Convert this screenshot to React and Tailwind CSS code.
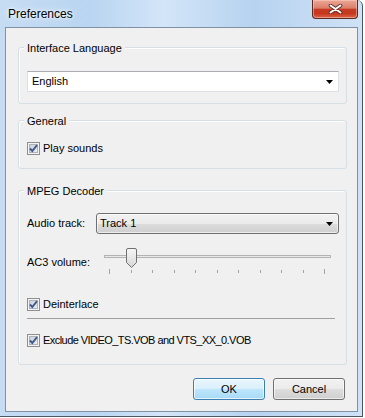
import React from "react";

const FONT = { fontFamily: '"Liberation Sans", Arial, sans-serif' };

function CheckBox() {
  return (
    <svg width="13" height="13" viewBox="0 0 13 13" className="shrink-0">
      <defs>
        <linearGradient id="cbfill" x1="0" y1="0" x2="1" y2="1">
          <stop offset="0" stopColor="#c9ced6" />
          <stop offset="1" stopColor="#eef0f3" />
        </linearGradient>
      </defs>
      <rect x="0.5" y="0.5" width="12" height="12" fill="#f4f4f4" stroke="#8e8f8f" />
      <rect x="2.5" y="2.5" width="8" height="8" fill="url(#cbfill)" stroke="#aeb3b9" />
      <path d="M3 6.5 L5.3 9 L10 3.2" fill="none" stroke="#3f5a8e" strokeWidth="1.9" />
    </svg>
  );
}

function Arrow() {
  return (
    <svg width="7" height="4" viewBox="0 0 7 4">
      <path d="M0 0 H7 L3.5 4 Z" fill="#000" />
    </svg>
  );
}

function Group({ label, className = "", children }) {
  return (
    <div
      className={`relative mr-[10px] ml-[12px] rounded-[3px] border border-[#d5dfe5] pr-[7px] pl-[8px] shadow-[inset_1px_1px_0_#fff] ${className}`}
    >
      <span className="absolute top-[-7px] left-[5px] bg-[#f0f0f0] px-[3px] text-[11px] leading-[14px] text-black">
        {label}
      </span>
      {children}
    </div>
  );
}

function Slider() {
  const ticks = [0, 1, 2, 3, 4, 5, 6, 7, 8, 9, 10];
  return (
    <svg width="243" height="30" viewBox="0 0 243 30">
      <defs>
        <linearGradient id="thumb" x1="0" y1="0" x2="0" y2="1">
          <stop offset="0" stopColor="#f7f7f7" />
          <stop offset="1" stopColor="#d6d6d6" />
        </linearGradient>
      </defs>
      <rect x="8.5" y="8.5" width="226" height="2" fill="#e7eaea" stroke="#b3b3b3" />
      {ticks.map((i) => {
        const x = Math.round(13 + i * 21.5);
        const long = i === 0 || i === 10;
        return (
          <rect key={i} x={x} y={long ? 22 : 23} width="1" height={long ? 5 : 3} fill="#a3a3a3" />
        );
      })}
      <path
        d="M30.5 3 Q30.5 1.5 32 1.5 H39 Q40.5 1.5 40.5 3 V15.5 L35.5 20.5 L30.5 15.5 Z"
        fill="url(#thumb)"
        stroke="#707070"
      />
    </svg>
  );
}

export default function App() {
  return (
    <div className="h-[418px] w-[365px] bg-white" style={FONT}>
      <div className="flex h-[417px] w-[363px] flex-col rounded-tr-[6px] border-r border-b border-[#4a5866] bg-[linear-gradient(90deg,#c6dcf3_0%,#b9d5f1_25%,#d3e5f8_45%,#b7d3f0_70%,#cfe2f6_100%)] pr-[4px] pb-[4px] pl-[5px]">
        {/* title bar */}
        <div className="flex h-[27px] shrink-0 items-start">
          <span className="mt-[7px] ml-[3px] text-[12px] leading-[14px] text-black [text-shadow:0_0_7px_#fff,0_0_3px_#fff]">
            Preferences
          </span>
          <div className="flex-1" />
          <button
            type="button"
            className="flex h-[19px] w-[46px] items-center justify-center rounded-b-[4px] border border-t-0 border-[#5c2a22] bg-[linear-gradient(180deg,#eba898_0%,#db7f69_45%,#c43b24_52%,#c8381f_75%,#d9654b_100%)] shadow-[inset_0_0_0_1px_rgba(255,210,200,0.5)]"
          >
            <svg width="15" height="10" viewBox="0 0 15 10">
              <path d="M2.5 1.5 L12.5 8.5 M12.5 1.5 L2.5 8.5" stroke="#5a2b24" strokeWidth="3.6" strokeLinecap="round" />
              <path d="M2.5 1.5 L12.5 8.5 M12.5 1.5 L2.5 8.5" stroke="#fff" strokeWidth="2" strokeLinecap="round" />
            </svg>
          </button>
        </div>

        {/* client area */}
        <div className="flex h-[385px] flex-col border border-[#7f91a3] bg-[#f0f0f0] text-[11px] text-black">
          <Group label="Interface Language" className="mt-[19px] pt-[23px] pb-[11px]">
            <div className="flex h-[21px] items-center justify-between border border-[#dde1e7] border-t-[#abadb3] bg-white pr-[5px] pl-[4px]">
              <span>English</span>
              <Arrow />
            </div>
          </Group>

          <Group label="General" className="mt-[16px] pt-[19px] pb-[12px]">
            <div className="flex h-[16px] items-center gap-[3px]">
              <CheckBox />
              <span>Play sounds</span>
            </div>
          </Group>

          <Group label="MPEG Decoder" className="mt-[21px] pt-[22px] pb-[16px]">
            <div className="flex h-[21px] items-center">
              <span className="w-[69px] shrink-0">Audio track:</span>
              <div className="flex h-[21px] flex-1 items-center justify-between rounded-[3px] border border-[#707070] bg-[linear-gradient(180deg,#f2f2f2_0%,#ebebeb_50%,#dddddd_51%,#cfcfcf_100%)] pr-[5px] pl-[3px] shadow-[inset_0_0_0_1px_rgba(255,255,255,0.6)]">
                <span>Track 1</span>
                <Arrow />
              </div>
            </div>

            <div className="mt-[13px] flex h-[30px] items-center">
              <span className="w-[69px] shrink-0">AC3 volume:</span>
              <Slider />
            </div>

            <div className="mt-[19px] flex h-[16px] items-center gap-[3px]">
              <CheckBox />
              <span>Deinterlace</span>
            </div>

            <div className="mt-[6px] mr-[4px] h-px bg-[#a0a0a0]" />

            <div className="mt-[13px] flex h-[16px] items-center gap-[3px]">
              <CheckBox />
              <span className="tracking-[-0.55px]">Exclude VIDEO_TS.VOB and VTS_XX_0.VOB</span>
            </div>
          </Group>

          <div className="mt-[13px] flex justify-end gap-[8px] pr-[12px]">
            <button
              type="button"
              className="h-[22px] w-[72px] rounded-[3px] border border-[#3c7fb1] bg-[linear-gradient(180deg,#eaf6fd_0%,#d9f0fc_50%,#bee6fd_51%,#a7d9f5_100%)] text-[11px] text-black shadow-[inset_0_0_0_1px_rgba(255,255,255,0.7)]"
            >
              OK
            </button>
            <button
              type="button"
              className="h-[22px] w-[72px] rounded-[3px] border border-[#707070] bg-[linear-gradient(180deg,#f2f2f2_0%,#ebebeb_50%,#dddddd_51%,#cfcfcf_100%)] text-[11px] text-black shadow-[inset_0_0_0_1px_rgba(255,255,255,0.6)]"
            >
              Cancel
            </button>
          </div>
        </div>
      </div>
    </div>
  );
}
